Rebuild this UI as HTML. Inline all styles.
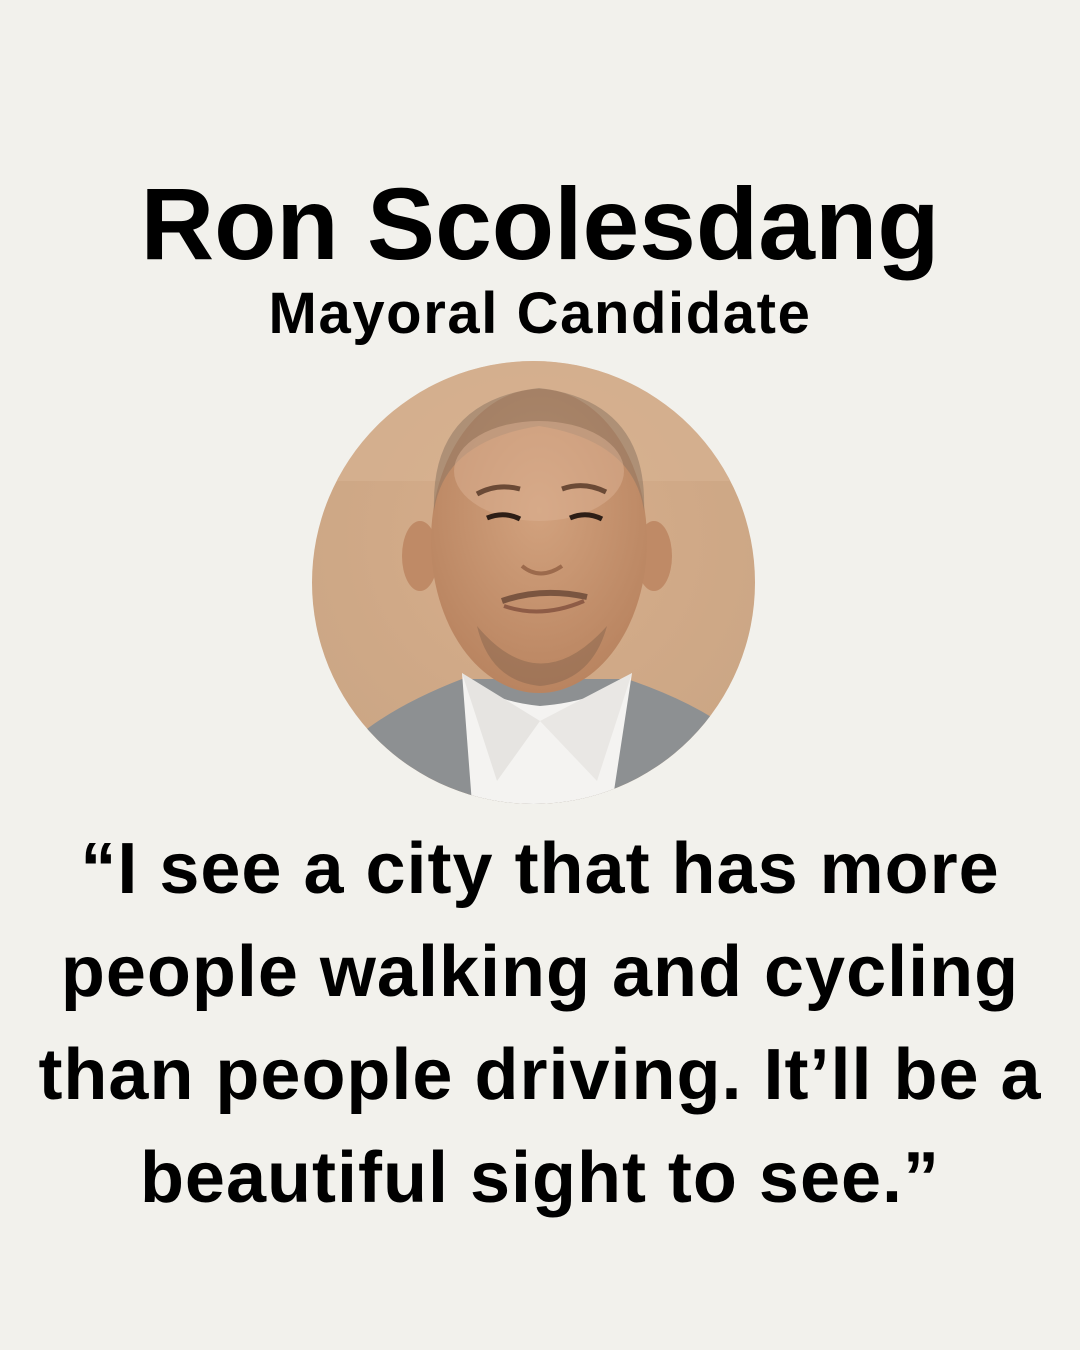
<!DOCTYPE html>
<html><head><meta charset="utf-8"><style>
html,body{margin:0;padding:0}
body{width:1080px;height:1350px;background:#f2f1ec;position:relative;overflow:hidden;font-family:"Liberation Sans",Arial,sans-serif;color:#000;font-weight:bold}
.t{position:absolute;left:0;width:1080px;text-align:center;white-space:nowrap}
#name{top:166px;font-size:102px;line-height:117px}
#sub{top:284px;font-size:58px;line-height:60px;letter-spacing:1.6px}
#q{top:818px;font-size:72px;line-height:103px;letter-spacing:1px}
svg{position:absolute;left:312px;top:361px}
</style></head><body>
<div class="t" id="name">Ron Scolesdang</div>
<div class="t" id="sub">Mayoral Candidate</div>
<svg width="443" height="443" viewBox="0 0 443 443">
<defs>
<clipPath id="c"><circle cx="221.5" cy="221.5" r="221.5"/></clipPath>
<radialGradient id="bg" cx="0.5" cy="0.4" r="0.7"><stop offset="0" stop-color="#d7ad8a"/><stop offset="1" stop-color="#c9a584"/></radialGradient>
<radialGradient id="sk" cx="0.5" cy="0.4" r="0.6"><stop offset="0" stop-color="#d2a27e"/><stop offset="1" stop-color="#b98460"/></radialGradient>
</defs>
<g clip-path="url(#c)">
<rect width="443" height="443" fill="url(#bg)"/>
<rect x="0" y="0" width="443" height="120" fill="#d9b596" opacity="0.5"/>
<rect x="195" y="250" width="70" height="100" fill="#b58260"/>
<path d="M20 443 L40 380 Q80 345 150 318 L315 318 Q380 340 420 370 L443 443 Z" fill="#8d9092"/>
<path d="M150 312 L160 443 L300 443 L320 312 Q290 340 228 345 Q175 340 150 312 Z" fill="#f4f3f1"/>
<path d="M150 312 L185 420 L228 360 Z" fill="#e6e4e1"/>
<path d="M320 312 L285 420 L228 360 Z" fill="#e9e7e4"/>
<ellipse cx="108" cy="195" rx="18" ry="35" fill="#bf8a66"/>
<ellipse cx="342" cy="195" rx="18" ry="35" fill="#bf8a66"/>
<ellipse cx="227" cy="180" rx="108" ry="152" fill="url(#sk)"/>
<path d="M122 150 Q118 40 227 27 Q336 40 332 150 Q322 80 227 65 Q132 80 122 150 Z" fill="#8e7663" opacity="0.55"/>
<ellipse cx="227" cy="110" rx="85" ry="50" fill="#dcb293" opacity="0.5"/>
<path d="M165 133 Q185 122 208 128" stroke="#6b4a36" stroke-width="5" fill="none"/>
<path d="M250 128 Q272 120 294 131" stroke="#6b4a36" stroke-width="5" fill="none"/>
<path d="M175 157 Q192 150 208 158" stroke="#2d1e16" stroke-width="5" fill="none"/>
<path d="M258 157 Q274 150 290 158" stroke="#2d1e16" stroke-width="5" fill="none"/>
<path d="M210 205 Q228 220 250 205" stroke="#9c6a4c" stroke-width="4" fill="none"/>
<path d="M190 240 Q230 226 275 236" stroke="#7a5540" stroke-width="6" fill="none"/>
<path d="M192 245 Q230 258 272 240" stroke="#8e5c46" stroke-width="4" fill="none"/>
<path d="M165 265 Q228 340 295 265 Q280 320 228 325 Q178 320 165 265 Z" fill="#8f6a52" opacity="0.6"/>
</g>
</svg>
<div class="t" id="q">“I see a city that has more<br>people walking and cycling<br>than people driving. It’ll be a<br>beautiful sight to see.”</div>
</body></html>
